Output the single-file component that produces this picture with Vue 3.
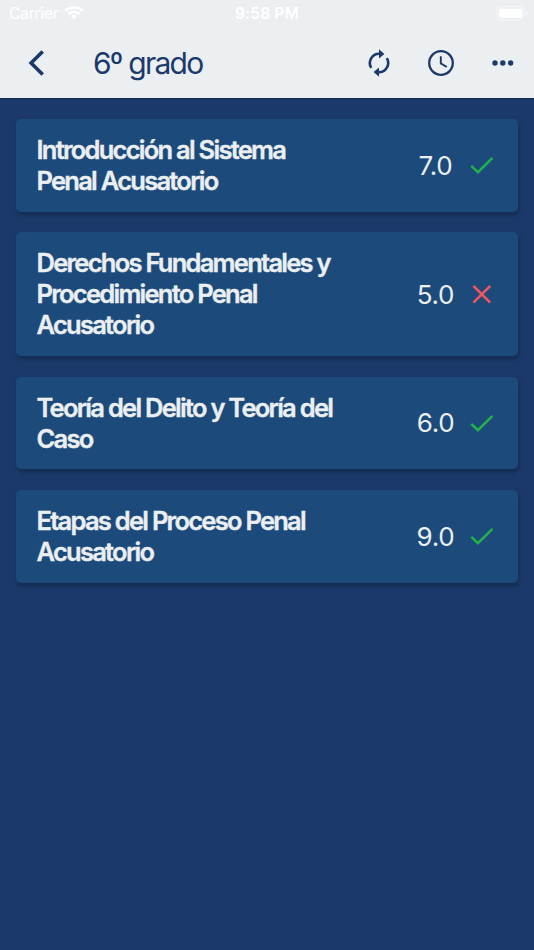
<template>
  <div class="screen">
    <header class="header">
      <div class="status-bar">
        <div class="status-bar__left">
          <span class="status-bar__carrier">Carrier</span>
          <svg class="status-bar__wifi" viewBox="0 0 20 15">
            <path d="M0.3 4.8 A14 14 0 0 1 19.7 4.8 L17.7 6.8 A11 11 0 0 0 2.3 6.8 Z" />
            <path d="M3.6 8.1 A9.2 9.2 0 0 1 16.4 8.1 L14.4 10.1 A6.4 6.4 0 0 0 5.6 10.1 Z" />
            <path d="M6.8 11.3 A4.7 4.7 0 0 1 13.2 11.3 L10 14.5 Z" />
          </svg>
        </div>
        <span class="status-bar__time">9:58 PM</span>
        <svg class="status-bar__battery" viewBox="0 0 32 15">
          <rect class="battery-frame" x="0.7" y="0.7" width="27.6" height="13.3" rx="4" />
          <rect x="2.8" y="2.7" width="23.4" height="9.3" rx="2" />
          <path class="battery-cap" d="M29.7 5 Q31.6 5.5 31.6 7.4 Q31.6 9.3 29.7 9.8 Z" />
        </svg>
      </div>

      <div class="nav-bar">
        <svg class="nav-bar__back" viewBox="0 0 16 26">
          <path d="M14.7 1.4 L3.1 13 L14.7 24.6" />
        </svg>
        <h1 class="nav-bar__title">6º grado</h1>
        <svg class="nav-bar__sync" viewBox="0 0 30 30">
          <path class="sync-arc" d="M7.2 19.9 A9.3 9.3 0 0 1 15.5 5.8 M22.8 10.1 A9.3 9.3 0 0 1 14.5 24.2" />
          <path class="sync-head" d="M15 1.2 L20.4 5.9 L15 10.6 Z M15 19.4 L9.6 24.1 L15 28.8 Z" />
        </svg>
        <svg class="nav-bar__clock" viewBox="0 0 26 26">
          <circle cx="13" cy="13" r="11.8" />
          <path class="clock-hands" d="M12.8 6.3 V13.4 L18.8 17" />
        </svg>
        <svg class="nav-bar__more" viewBox="0 0 22 6">
          <circle cx="3" cy="3" r="2.7" />
          <circle cx="10.8" cy="3" r="2.7" />
          <circle cx="18.6" cy="3" r="2.7" />
        </svg>
      </div>
    </header>

    <main class="list">
      <div v-for="item in subjects" :key="item.name" class="card">
        <h2 class="card__name">{{ item.name }}</h2>
        <span class="card__score">{{ item.score.toFixed(1) }}</span>
        <svg v-if="item.score >= PASSING_SCORE" class="card__icon card__icon--ok" viewBox="0 0 24 24">
          <path d="M1.3 12.9 L7.9 19.2 L22.5 4.8" />
        </svg>
        <svg v-else class="card__icon card__icon--fail" viewBox="0 0 24 24">
          <path d="M3.4 3.8 L20.2 20.6 M20.2 3.8 L3.4 20.6" />
        </svg>
      </div>
    </main>
  </div>
</template>

<script setup>
import { ref } from 'vue'

const PASSING_SCORE = 6

const subjects = ref([
  { name: 'Introducción al Sistema Penal Acusatorio', score: 7 },
  { name: 'Derechos Fundamentales y Procedimiento Penal Acusatorio', score: 5 },
  { name: 'Teoría del Delito y Teoría del Caso', score: 6 },
  { name: 'Etapas del Proceso Penal Acusatorio', score: 9 }
])
</script>

<style>
body {
  margin: 0;
  background: #1b3a6b;
}
</style>

<style scoped>
.screen {
  min-height: 950px;
  background: #1b3a6b;
  font-family: Inter, 'Liberation Sans', sans-serif;
}

.header {
  height: 98px;
  background: #ebeff2;
  box-shadow: 0 1px 1px rgba(0, 0, 0, 0.3);
}

.status-bar {
  display: grid;
  grid-template-columns: 1fr auto 1fr;
  align-items: center;
  height: 27px;
  padding: 0 6px 0 9px;
  color: #fff;
  fill: #fff;
}

.status-bar__left {
  display: flex;
  align-items: center;
  gap: 6px;
}

.status-bar__carrier {
  font-size: 15.5px;
  letter-spacing: -0.2px;
}

.status-bar__wifi {
  width: 20px;
  height: 15px;
  margin-top: -2px;
}

.status-bar__time {
  margin-left: -3px;
  font-size: 15.5px;
  font-weight: 600;
  letter-spacing: 0.2px;
}

.status-bar__battery {
  justify-self: end;
  width: 32px;
  height: 15px;
}

.battery-frame {
  fill: none;
  stroke: #fff;
  stroke-width: 1.3;
  opacity: 0.4;
}

.battery-cap {
  opacity: 0.5;
}

.nav-bar {
  display: flex;
  align-items: center;
  height: 71px;
  padding-right: 20px;
  padding-left: 28px;
}

.nav-bar__back {
  width: 16px;
  height: 26px;
  fill: none;
  stroke: #1b3a6b;
  stroke-width: 3.6;
}

.nav-bar__title {
  flex: 1;
  margin: 0 0 0 49px;
  color: #1b3a6b;
  font-size: 30px;
  font-weight: 400;
  letter-spacing: -1.75px;
  line-height: 36px;
}

.nav-bar__sync {
  width: 30px;
  height: 30px;
}

.sync-arc {
  fill: none;
  stroke: #1b3a6b;
  stroke-width: 2.6;
}

.sync-head {
  fill: #1b3a6b;
}

.nav-bar__clock {
  width: 26px;
  height: 26px;
  margin-left: 34px;
  fill: none;
  stroke: #1b3a6b;
  stroke-width: 2.3;
}

.clock-hands {
  stroke-width: 1.9;
}

.nav-bar__more {
  width: 22px;
  height: 6px;
  margin-left: 38px;
  fill: #1b3a6b;
}

.list {
  display: flex;
  flex-direction: column;
  gap: 20.8px;
  padding: 21px 16px;
}

.card {
  display: flex;
  align-items: center;
  padding: 15.4px 24px 15.4px 20.5px;
  border-radius: 5px;
  background: #1c4a7a;
  box-shadow: 1px 3px 5px rgba(0, 0, 0, 0.28);
}

.card__name {
  width: 310px;
  margin: 0 0 -0.7px;
  padding-top: 0.7px;
  color: #ebeff2;
  font-size: 25.5px;
  font-weight: 600;
  letter-spacing: -1.74px;
  line-height: 30.9px;
  -webkit-text-stroke: 0.35px #ebeff2;
}

.card__score {
  width: 56px;
  margin-left: auto;
  color: #ebeff2;
  font-size: 26px;
  letter-spacing: -0.3px;
  text-align: center;
}

.card__icon {
  width: 24px;
  height: 24px;
  margin-left: 6.5px;
  fill: none;
  stroke-width: 2.5;
}

.card__icon--ok {
  stroke: #22b14c;
}

.card__icon--fail {
  stroke: #f5555d;
}
</style>
